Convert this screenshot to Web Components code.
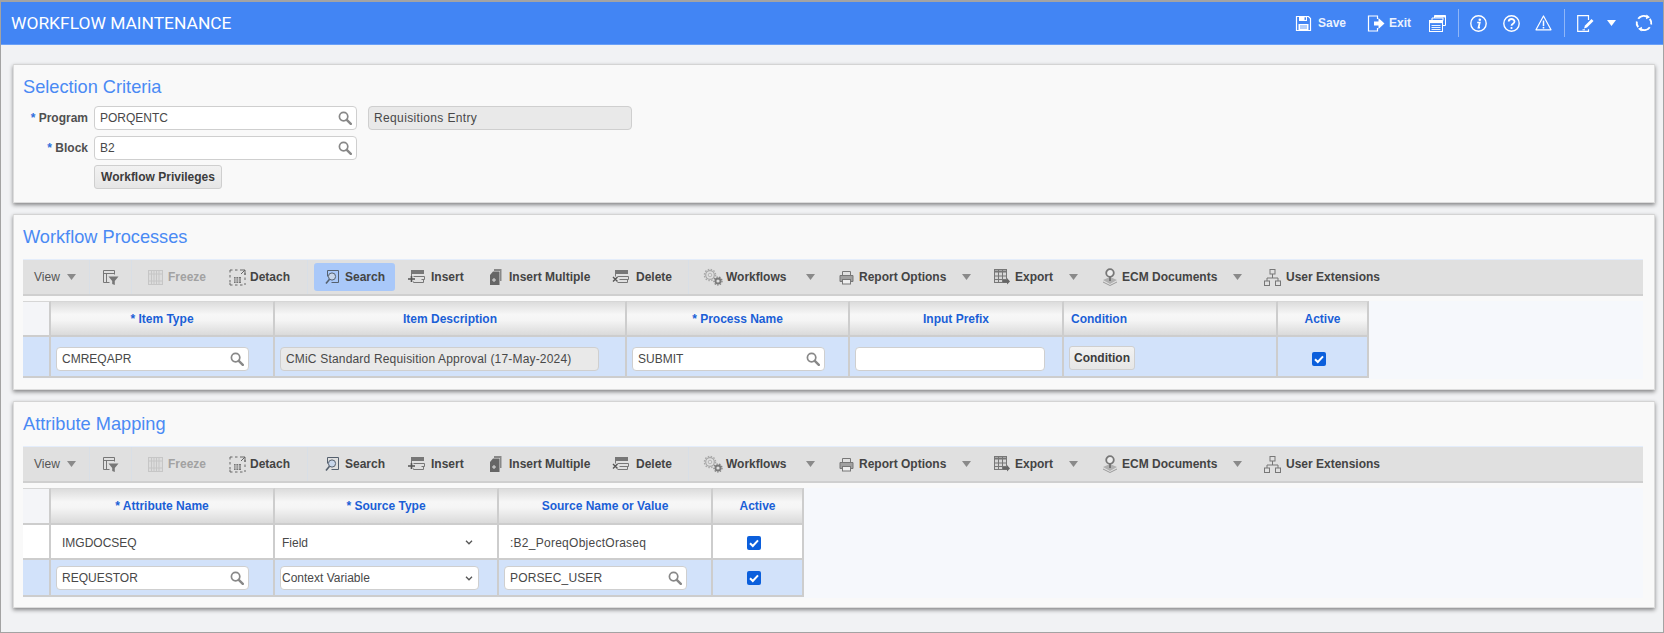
<!DOCTYPE html>
<html lang="en"><head><meta charset="utf-8"><title>Workflow Maintenance</title>
<style>
html,body{margin:0;padding:0;background:#f1f2f4;font-family:"Liberation Sans",Arial,sans-serif}
</style></head><body>
<wm-app>
  <wm-header title-text="WORKFLOW MAINTENANCE"></wm-header>
  <wm-panel heading="Selection Criteria" bottom="13" gap="7" style="margin-top:19px">
    <wm-form>
      <wm-row label="Program">
        <wm-input value="PORQENTC" lookup style="width:263px"></wm-input>
        <wm-input value="Requisitions Entry" readonly track=".36" style="width:264px;margin-left:11px"></wm-input>
      </wm-row>
      <wm-row label="Block"><wm-input value="B2" lookup style="width:263px"></wm-input></wm-row>
      <wm-row><wm-button style="width:128px">Workflow Privileges</wm-button></wm-row>
    </wm-form>
  </wm-panel>
  <wm-panel heading="Workflow Processes" bottom="10" gap="10">
    <wm-toolbar active-search></wm-toolbar>
    <wm-grid columns="28px 224px 352px 223px 214px 214px 91px">
      <wm-cell kind="corner" h="36"></wm-cell>
      <wm-cell kind="head" h="36">* Item Type</wm-cell>
      <wm-cell kind="head" h="36">Item Description</wm-cell>
      <wm-cell kind="head" h="36">* Process Name</wm-cell>
      <wm-cell kind="head" h="36">Input Prefix</wm-cell>
      <wm-cell kind="head" h="36" align="left">Condition</wm-cell>
      <wm-cell kind="head" h="36">Active</wm-cell>
      <wm-cell kind="sel" h="41"></wm-cell>
      <wm-cell kind="sel" h="41" pt="4"><wm-input value="CMREQAPR" lookup style="width:193px"></wm-input></wm-cell>
      <wm-cell kind="sel" h="41" pt="4"><wm-input value="CMiC Standard Requisition Approval (17-May-2024)" readonly track=".18" style="width:319px"></wm-input></wm-cell>
      <wm-cell kind="sel" h="41" pt="4"><wm-input value="SUBMIT" lookup style="width:193px"></wm-input></wm-cell>
      <wm-cell kind="sel" h="41" pt="4"><wm-input value="" style="width:190px"></wm-input></wm-cell>
      <wm-cell kind="sel" h="41" pt="3"><wm-button style="width:66px">Condition</wm-button></wm-cell>
      <wm-cell kind="sel" h="41" pt="4" align="check"><wm-check></wm-check></wm-cell>
    </wm-grid>
  </wm-panel>
  <wm-panel heading="Attribute Mapping" bottom="9" gap="10">
    <wm-toolbar></wm-toolbar>
    <wm-grid columns="28px 224px 224px 214px 91px">
      <wm-cell kind="corner"></wm-cell>
      <wm-cell kind="head">* Attribute Name</wm-cell>
      <wm-cell kind="head">* Source Type</wm-cell>
      <wm-cell kind="head">Source Name or Value</wm-cell>
      <wm-cell kind="head">Active</wm-cell>
      <wm-cell kind="plain" h="35"></wm-cell>
      <wm-cell kind="plain" h="35" pt="2"><wm-text pad="6">IMGDOCSEQ</wm-text></wm-cell>
      <wm-cell kind="plain" h="35" pt="2"><wm-select bare value="Field" style="width:199px"></wm-select></wm-cell>
      <wm-cell kind="plain" h="35" pt="2"><wm-text pad="6" track=".26">:B2_PoreqObjectOraseq</wm-text></wm-cell>
      <wm-cell kind="plain" h="35" pt="2" align="check"><wm-check></wm-check></wm-cell>
      <wm-cell kind="sel" h="37"></wm-cell>
      <wm-cell kind="sel" h="37" pt="1"><wm-input value="REQUESTOR" lookup style="width:193px"></wm-input></wm-cell>
      <wm-cell kind="sel" h="37" pt="1"><wm-select value="Context Variable" style="width:199px"></wm-select></wm-cell>
      <wm-cell kind="sel" h="37" pt="1"><wm-input value="PORSEC_USER" lookup track=".15" style="width:183px"></wm-input></wm-cell>
      <wm-cell kind="sel" h="37" pt="1" align="check"><wm-check></wm-check></wm-cell>
    </wm-grid>
  </wm-panel>
</wm-app>
<script>
const sh=(el,html)=>{el.attachShadow({mode:'open'}).innerHTML=html;};
const I={
 filter:`<svg width="17" height="17" viewBox="0 0 17 17" fill="none" stroke="#777"><path d="M1.500 13.500v-12h11v4M1.500 4.500h11M4.500 4.500v9M1.500 13.500h6"/><path d="M6.500 7.500h10l-3.700 4.400v4.200l-2.600-1.200v-3z" fill="#777" stroke="none"/></svg>`,
 freeze:`<svg width="15" height="15" viewBox="0 0 15 15" fill="none" stroke="#c6c6c6"><rect x=".5" y=".5" width="14" height="14" fill="#dcdcdc"/><path d="M3.500 1v13M6 1v13M8.500 1v13M11 1v13M1 4h13M1 11h13"/></svg>`,
 detach:`<svg width="17" height="17" viewBox="0 0 17 17" fill="none" stroke="#666"><path d="M1 3.500V1h2.500M6 1h2.500M1 6v2.500M1 11v2.500M1 14v2h2.500M6 16h2.500M11 16h2.500M16 14v2M16 8.500V11M16 6V4"/><path d="M11 1h5v5M16 1l-4 4"/><path d="M5 8h7v6H5z" fill="#777" stroke="none"/><path d="M5 10h7M5 12h7M7 8v6M9.500 8v6" stroke="#e0e0e0" stroke-width=".7"/></svg>`,
 search:`<svg width="15" height="16" viewBox="0 0 15 16" fill="none" stroke="#55606e"><path d="M2.500 1.500h11v12h-7M2.500 1.500v6"/><circle cx="7" cy="7.500" r="3.600" fill="#c8d6ea"/><path d="M4.500 10.200L1 14.500" stroke-width="1.600"/></svg>`,
 insert:`<svg width="17" height="16" viewBox="0 0 17 16" fill="none" stroke="#777"><rect x="3.500" y="1.500" width="12" height="3" fill="#777"/><path d="M5.500 7.500h11v3h-3M3.500 4.500v3M15.500 10.500v3h-10v-1"/><path d="M0 10h7M3.500 7v6" stroke-width="1.600" stroke="#555"/></svg>`,
 multi:`<svg width="14" height="16" viewBox="0 0 14 16"><path d="M5 0h7.500v12H11V2H5z" fill="#888"/><path d="M4 2.500h6.500V16H1V6z" fill="#666"/><path d="M5 9v4M3 11h4" stroke="#ddd"/></svg>`,
 del:`<svg width="17" height="16" viewBox="0 0 17 16" fill="none" stroke="#777"><rect x="3.500" y="1.500" width="12" height="3" fill="#777"/><path d="M5.500 7.500h11v3h-9M3.500 4.500v3M15.500 10.500v3h-10"/><path d="M1 8l4.500 4.500M5.500 8L1 12.500" stroke="#555" stroke-width="1.400"/></svg>`,
 gears:`<svg width="20" height="18" viewBox="0 0 20 18" fill="none"><circle cx="7" cy="7" r="4.300" stroke="#a8a8a8" stroke-width="1.200"/><circle cx="7" cy="7" r="5.600" stroke="#a8a8a8" stroke-width="1.400" stroke-dasharray="1.500 1.430"/><circle cx="7" cy="7" r="1.800" stroke="#b5b5b5"/><circle cx="15" cy="13" r="2.500" stroke="#7b7b7b" stroke-width="1.800"/><circle cx="15" cy="13" r="4" stroke="#7b7b7b" stroke-width="1.200" stroke-dasharray="1.400 1.390"/></svg>`,
 print:`<svg width="15" height="15" viewBox="0 0 15 15" fill="none" stroke="#777"><path d="M3.500 5V1.500h8V5"/><path d="M3 11.500H1V5.500h13v6h-2" fill="#a0a0a0"/><rect x="3.500" y="9.500" width="8" height="4.500" fill="#eee"/></svg>`,
 exportI:`<svg width="16" height="16" viewBox="0 0 16 16" fill="none" stroke="#777"><rect x=".5" y=".5" width="12" height="13" fill="#d6d6d6"/><path d="M.5 2.500h12" stroke-width="2"/><path d="M4.500 1v12M8.500 1v12M1 7h11M1 10.500h11"/><path d="M9 11h4V9l3 3.500-3 3v-2H9z" fill="#666" stroke="none"/></svg>`,
 ecm:`<svg width="16" height="18" viewBox="0 0 16 18" fill="none"><path d="M1 12l7-3 7 3-7 4z" fill="#b0b0b0"/><path d="M1 14l7 3.500 7-3.500" stroke="#999"/><circle cx="8" cy="5" r="3.800" stroke="#777" stroke-width="1.800" fill="#eee"/><path d="M8 9v4" stroke="#777" stroke-width="2"/></svg>`,
 tree:`<svg width="17" height="17" viewBox="0 0 17 17" fill="none" stroke="#777"><rect x="6" y=".5" width="5" height="4.500"/><rect x=".5" y="12" width="5" height="4.500"/><rect x="11.500" y="12" width="5" height="4.500"/><path d="M8.500 5v4M3 12V9h11v3"/></svg>`,
 glass:`<svg width="14" height="14" viewBox="0 0 14 14" fill="none" stroke="#888"><circle cx="5.600" cy="5.600" r="4.200" stroke-width="1.700"/><path d="M8.800 8.800l4 4" stroke-width="2.400" stroke-linecap="round"/></svg>`,
 save:`<svg width="17" height="17" viewBox="0 0 17 17" fill="none" stroke="#fff"><path d="M1.500 1.500h12l2 2v12h-14z" stroke-width="1.200"/><rect x="4" y="1.500" width="8" height="4.500" fill="#fff" stroke="none"/><rect x="9.500" y="2.300" width="1.500" height="2.600" fill="#4285f4" stroke="none"/><rect x="3.500" y="9" width="10" height="6.500" fill="#fff" stroke="none"/><path d="M5 11h7M5 13h7" stroke="#4285f4" stroke-width=".8"/></svg>`,
 exit:`<svg width="18" height="17" viewBox="0 0 18 17" fill="none" stroke="#fff"><path d="M10.500 4V1h-9v15h9v-3" stroke-width="1.200"/><path d="M7 6.500h4.500V3l6 5.500-6 5.500v-3.500H7z" fill="#fff" stroke="none"/></svg>`,
 windows:`<svg width="17" height="17" viewBox="0 0 17 17" fill="none" stroke="#fff"><path d="M5.500 3V.5h11v10H14"/><path d="M5.500 1.500h11" stroke-width="2"/><path d="M3 5.500V3h11v2.500"/><rect x=".5" y="5.500" width="13" height="11" fill="#4285f4"/><path d="M.5 7h13" stroke-width="2.200"/><path d="M2.500 10.500h9M2.500 12.500h9M2.500 14.500h9" stroke-width=".9"/></svg>`,
 info:`<svg width="17" height="17" viewBox="0 0 17 17" fill="none" stroke="#fff"><circle cx="8.500" cy="8.500" r="7.700" stroke-width="1.400"/><path d="M7.200 7.500H9.800L8.500 12.600h1.500" stroke-width="1.700"/><circle cx="9.800" cy="4.700" r="1.300" fill="#fff" stroke="none"/></svg>`,
 help:`<svg width="17" height="17" viewBox="0 0 17 17" fill="none" stroke="#fff"><circle cx="8.500" cy="8.500" r="7.700" stroke-width="1.400"/><path d="M5.700 6.600c0-3.500 5.800-3.500 5.800 0 0 2.200-3 2-3 4.200" stroke-width="1.800"/><circle cx="8.500" cy="13" r="1.100" fill="#fff" stroke="none"/></svg>`,
 warn:`<svg width="17" height="16" viewBox="0 0 17 16" fill="none" stroke="#fff"><path d="M8.500 1L16 14.800H1z" stroke-width="1.200" stroke-linejoin="round"/><path d="M8.500 5.500v5.500" stroke-width="1.500"/><circle cx="8.500" cy="12.700" r=".9" fill="#fff" stroke="none"/></svg>`,
 edit:`<svg width="17" height="17" viewBox="0 0 17 17" fill="none" stroke="#fff"><path d="M11.500 5V.7H.7v15.600h10.800v-2" stroke-width="1.200"/><path d="M7 13.500l1-3L14.500 4l2 2-6.500 6.500z" fill="#fff" stroke="none"/><path d="M5.500 14.800H8"/></svg>`,
 refresh:`<svg width="18" height="18" viewBox="0 0 18 18" fill="none" stroke="#fff"><path d="M3.200 4.800A7 7 0 0 1 12 2.700M14.800 13.200A7 7 0 0 1 6 15.300M1.800 7.500a7 7 0 0 0 1.400 5.700M16.200 10.500a7 7 0 0 0-1.400-5.700" stroke-width="1.900"/><path d="M11.500 .5l3.500 2.800-4 2zM6.500 17.500L3 14.700l4-2z" fill="#fff" stroke="none"/></svg>`
};
class App extends HTMLElement{constructor(){super();sh(this,`<style>:host{display:block;box-sizing:border-box;width:1664px;height:633px;overflow:hidden;background:#f1f2f4;border:1px solid #a3a3a3;border-top:2px solid #a3a3a3}
.c{display:flex;flex-direction:column}</style><div class="c"><slot></slot></div>`)}}
class Header extends HTMLElement{constructor(){super();const it=[[1295,'save'],[1318,'t','Save'],[1367,'exit'],[1389,'t','Exit'],[1429,'windows'],[1458,'s'],[1470,'info'],[1503,'help'],[1535,'warn'],[1564,'s'],[1577,'edit'],[1607,'a'],[1635,'refresh']];
 let h='';it.forEach((x,i)=>{const next=i<it.length-1?it[i+1][0]:1661;const w=next-x[0];let c='';if(x[1]==='t')c=`<b>${x[2]}</b>`;else if(x[1]==='s')c='<i class="sep"></i>';else if(x[1]==='a')c='<svg width="9" height="6" viewBox="0 0 9 6"><path d="M0 0h9L4.500 6z" fill="#fff"/></svg>';else c=I[x[1]];h+=`<span class="it" style="width:${w}px">${c}</span>`});
 sh(this,`<style>:host{display:block;height:43px;background:#4285f4;border-bottom:1px solid #6aa0f7;box-sizing:border-box;color:#fff}
 .b{display:flex;align-items:center;height:100%}h1{margin:0 0 0 10px;font:400 17.400px Roboto,sans-serif;color:#fff;width:1284px}
 .it{display:flex;align-items:center;height:28px;flex:none}b{font:700 12px "Liberation Sans",sans-serif;color:#eaf1fe}.sep{display:block;width:1px;height:28px;background:#8fb6f8}</style>
 <div class="b"><h1>${this.getAttribute('title-text')}</h1>${h}</div>`)}}
class Panel extends HTMLElement{constructor(){super();sh(this,`<style>:host{display:block;box-sizing:border-box;margin:0 8px 11px 12px;background:#f9f9f9;border:1px solid #dcdcdc;border-top-color:#d4d4d4;box-shadow:0 2px 4px rgba(0,0,0,.45);padding:10px 11px ${this.getAttribute('bottom')}px 9px}
 h2{margin:0 0 ${this.getAttribute('gap')}px;font:400 18.200px/24px "Liberation Sans",sans-serif;color:#4a8af4}</style><h2>${this.getAttribute('heading')}</h2><slot></slot>`)}}
class Form extends HTMLElement{constructor(){super();sh(this,`<style>:host{display:flex;flex-direction:column;gap:5.500px}</style><slot></slot>`)}}
class Row extends HTMLElement{constructor(){super();const l=this.getAttribute('label');sh(this,`<style>:host{display:flex;align-items:center;height:24px}
 .l{width:65px;margin-right:6px;text-align:right;font:700 12px "Liberation Sans",sans-serif;color:#505050;flex:none;white-space:nowrap}.l i{font-style:normal;color:#2f6fdc}</style>
 <span class="l">${l?`<i>*</i> ${l}`:''}</span><slot></slot>`)}}
class Input extends HTMLElement{constructor(){super();const ro=this.hasAttribute('readonly');sh(this,`<style>:host{display:block;box-sizing:border-box;height:24px;flex:none;border:1px solid #cfcfcf;border-radius:4px;background:${ro?'#e9e9e9':'#fff'}}
 .v{display:flex;align-items:center;justify-content:space-between;height:100%;padding:0 4px 0 5px;font:400 12px "Liberation Sans",sans-serif;letter-spacing:${this.getAttribute('track')||0}px;color:#484848;white-space:nowrap}svg{display:block}</style>
 <div class="v"><span>${this.getAttribute('value')||''}</span>${this.hasAttribute('lookup')?I.glass:''}</div>`)}}
class Sel extends HTMLElement{constructor(){super();const bare=this.hasAttribute('bare');sh(this,`<style>:host{display:block;box-sizing:border-box;height:24px;flex:none;border:1px solid ${bare?'transparent':'#cfcfcf'};border-radius:4px;background:${bare?'transparent':'#fff'}}
 .v{display:flex;align-items:center;justify-content:space-between;height:100%;padding:0 5px 0 1px;font:400 12px "Liberation Sans",sans-serif;color:#484848;white-space:nowrap}</style>
 <div class="v"><span>${this.getAttribute('value')}</span><svg width="8" height="5" viewBox="0 0 8 5" fill="none" stroke="#555" stroke-width="1.300"><path d="M1 .8l3 3 3-3"/></svg></div>`)}}
class Btn extends HTMLElement{constructor(){super();sh(this,`<style>:host{display:flex;box-sizing:border-box;height:24px;flex:none;align-items:center;justify-content:center;border:1px solid #cfcfcf;border-radius:3px;background:linear-gradient(#f2f2f2,#e6e6e6);font:700 12px "Liberation Sans",sans-serif;color:#3c3c3c;white-space:nowrap}</style><slot></slot>`)}}
class Text extends HTMLElement{constructor(){super();sh(this,`<style>:host{display:block;padding-left:${this.getAttribute('pad')}px;font:400 12px "Liberation Sans",sans-serif;letter-spacing:${this.getAttribute('track')||0}px;color:#484848;white-space:nowrap}</style><slot></slot>`)}}
class Check extends HTMLElement{constructor(){super();sh(this,`<style>:host{display:block;width:14px;height:14px;flex:none;border-radius:2px;background:#0b5fdc}svg{display:block}</style><svg width="14" height="14" viewBox="0 0 14 14" fill="none" stroke="#fff" stroke-width="2"><path d="M3 7.200l2.800 2.800L11 4.300"/></svg>`)}}
class Toolbar extends HTMLElement{constructor(){super();const act=this.hasAttribute('active-search');
 const L=[[34,'v','View'],[67,'a'],[89,'s'],[102,'i','filter'],[131,'s'],[148,'it','freeze','Freeze',20,1],[229,'it','detach','Detach',21],[307,'s'],[314,'search','search','Search'],[408,'it','insert','Insert',23],[489,'it','multi','Insert Multiple',20],[612,'it','del','Delete',24],[688,'s'],[703,'it','gears','Workflows',23],[806,'a'],[839,'it','print','Report Options',20],[962,'a'],[994,'it','exportI','Export',21],[1069,'a'],[1102,'it','ecm','ECM Documents',20],[1233,'a'],[1264,'it','tree','User Extensions',22]];
 let h='';L.forEach((x,i)=>{const w=(i<L.length-1?L[i+1][0]:1400)-x[0];let c='';const k=x[1];
  if(k==='v')c=`<span class="vw">${x[2]}</span>`;
  else if(k==='a')c='<svg width="9" height="6" viewBox="0 0 9 6"><path d="M0 0h9L4.500 6z" fill="#8a8a8a"/></svg>';
  else if(k==='s')c='<i class="sep"></i>';
  else if(k==='i')c=I[x[2]];
  else if(k==='search')c=`<span class="sb ${act?'on':''}"><span class="ib" style="width:20px">${I.search}</span><b>${x[3]}</b></span>`;
  else c=`<span class="ib" style="width:${x[4]}px">${I[x[2]]}</span><b class="${x[5]?'dis':''}">${x[3]}</b>`;
  h+=`<span class="it" style="width:${w}px">${c}</span>`});
 sh(this,`<style>:host{display:flex;box-sizing:border-box;height:37px;align-items:center;background:#e0e0e0;border-top:1px solid #e4edfb;border-bottom:2px solid #cfcfcf;padding-left:11px;overflow:hidden}
 .it{display:flex;align-items:center;flex:none;height:100%}.ib{display:inline-flex;align-items:center;flex:none}svg{display:block}
 b{font:700 12px "Liberation Sans",sans-serif;color:#444;white-space:nowrap}b.dis{color:#a2a2a2}.vw{font:400 12px "Liberation Sans",sans-serif;color:#555}
 .sep{display:block;width:1px;height:100%;background:#d9dfe6}
 .sb{display:flex;align-items:center;width:81px;height:28px;box-sizing:border-box;padding-left:11px;border-radius:3px}.sb.on{background:#a9c8f9}</style>${h}`)}}
class Grid extends HTMLElement{constructor(){super();sh(this,`<style>:host{display:block;margin-top:5px;background:#f6f8fc;padding-bottom:1px}
 .g{display:grid;grid-template-columns:${this.getAttribute('columns')};width:max-content}</style><div class="g"><slot></slot></div>`)}}
class Cell extends HTMLElement{constructor(){super();const k=this.getAttribute('kind'),al=this.getAttribute('align'),h=this.getAttribute('h')||37,pt=this.getAttribute('pt')||0;
 const bg={corner:'#f4f5f8',head:'linear-gradient(#dcdcdc,#f7f7f7 38%,#f5f5f5 55%,#dadada)',sel:'#d2e2fa',plain:'#fff'}[k];
 const just=k==='head'&&al!=='left'?'center':'flex-start';
 const pad=al==='check'?'34px':(k==='head'&&al==='left'?'7px':(k==='head'?'0':'5px'));
 sh(this,`<style>:host{display:flex;box-sizing:border-box;height:${h}px;align-items:center;justify-content:${just};padding:${pt}px 0 0 ${pad};background:${bg};border-right:2px solid #cdcdcd;border-bottom:2px solid #cdcdcd;${k==='head'||k==='corner'?'border-top:1px solid #d6d6d6;':''}font:700 12px "Liberation Sans",sans-serif;color:#1b5fd6;white-space:nowrap}</style><slot></slot>`)}}
[['wm-app',App],['wm-header',Header],['wm-panel',Panel],['wm-form',Form],['wm-row',Row],['wm-input',Input],['wm-select',Sel],['wm-button',Btn],['wm-text',Text],['wm-check',Check],['wm-toolbar',Toolbar],['wm-grid',Grid],['wm-cell',Cell]].forEach(([n,c])=>customElements.define(n,c));
</script>
</body></html>
